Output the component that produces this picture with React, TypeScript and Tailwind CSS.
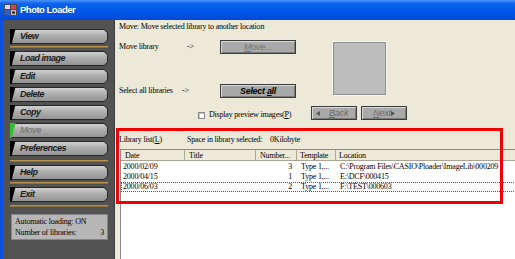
import React from 'react';

const serif = "font-['Liberation_Serif','Times_New_Roman',serif]";
const sans = "font-['Liberation_Sans',Arial,sans-serif]";

type Lib = { date: string; count: number; template: string; location: string };

const libraries: Lib[] = [
    { date: '2000/02/09', count: 3, template: 'Type 1,...', location: 'C:\\Program Files\\CASIO\\Ploader\\ImageLib\\000209' },
    { date: '2000/04/15', count: 1, template: 'Type 1,...', location: 'E:\\DCF\\000415' },
    { date: '2000/06/03', count: 2, template: 'Type 1,...', location: 'F:\\TEST\\000603' },
];

const SideButton: React.FC<{ label: string; disabled?: boolean }> = ({ label, disabled }) => (
    <div className="relative h-[15px] w-[98px] shrink-0 bg-[#262626] [clip-path:polygon(0_0,94px_0,98px_4px,98px_11px,94px_15px,0_15px)]">
        <div className="absolute left-[1px] top-[1px] flex h-[13px] w-[96px] items-center bg-[linear-gradient(180deg,#d2d2d2_0%,#b0b0b0_40%,#939393_100%)] pl-[9px] [clip-path:polygon(0_0,93px_0,96px_3px,96px_10px,93px_13px,0_13px)]">
            <span
                className={`${sans} text-[9px] font-bold italic leading-none tracking-[-0.5px] ${disabled ? 'text-[#7c7c7c]' : 'text-[#1c1c1c]'}`}
            >
                {label}
            </span>
        </div>
        <svg className="absolute left-0 top-0" width="6" height="15" viewBox="0 0 6 15">
            <polygon points="0,0 5.5,0 1.6,15 0,15" fill={disabled ? '#2fc02f' : '#000'} />
        </svg>
    </div>
);

const GoldLine: React.FC<{ className?: string }> = ({ className }) => (
    <div className={`h-[2px] w-[98px] bg-[linear-gradient(180deg,#c9a252,#7b6132)] ${className ?? ''}`} />
);

const GrayButton: React.FC<{ children: React.ReactNode; className?: string }> = ({ children, className }) => (
    <div
        className={`flex h-[14px] items-center justify-center border border-[#3c3c3c] bg-[#a9a9a9] shadow-[inset_1px_1px_0_#d8d8d8,inset_-1px_-1px_0_#7a7a7a] ${sans} text-[9px] italic leading-none ${className ?? ''}`}
    >
        {children}
    </div>
);

export default function App() {
    return (
        <div className={`flex h-[259px] w-[515px] flex-col overflow-hidden bg-[#ece9d8] ${serif} text-[8px] tracking-[-0.2px] text-black`}>
            {/* Title bar */}
            <div className="flex h-[20px] shrink-0 items-center gap-[3px] bg-[linear-gradient(180deg,#4a95fb_0%,#0c62ec_18%,#0057e8_60%,#0049d6_100%)] pl-[4px]">
                <svg width="13" height="12" viewBox="0 0 13 12">
                    <rect x="0" y="0" width="13" height="12" fill="#4a4a5a" />
                    <rect x="1" y="1" width="5" height="4" fill="#d8d8e8" />
                    <rect x="7" y="1" width="5" height="4" fill="#e04040" />
                    <rect x="1" y="6" width="5" height="5" fill="#3060d0" />
                    <rect x="7" y="6" width="5" height="5" fill="#c0c0c0" />
                    <circle cx="9.5" cy="8.5" r="1.5" fill="#303030" />
                </svg>
                <span className={`${sans} text-[9.5px] font-bold leading-none tracking-[-0.5px] text-white`}>Photo Loader</span>
            </div>

            <div className="flex flex-1">
                {/* Window frame */}
                <div className="w-[3px] shrink-0 bg-[#0a50e0]" />

                {/* Sidebar */}
                <div className="flex w-[112px] shrink-0 flex-col border-r border-[#3a3a3a] bg-[#525252] pl-[7px] pt-[9px]">
                    <SideButton label="View" />
                    <GoldLine className="mt-[2px]" />
                    <div className="mt-[3px] flex flex-col gap-[3px]">
                        <SideButton label="Load image" />
                        <SideButton label="Edit" />
                        <SideButton label="Delete" />
                        <SideButton label="Copy" />
                        <SideButton label="Move" disabled />
                        <SideButton label="Preferences" />
                    </div>
                    <GoldLine className="mt-[4px]" />
                    <div className="mt-[3px]">
                        <SideButton label="Help" />
                    </div>
                    <GoldLine className="mt-[2px]" />
                    <div className="mt-[3px]">
                        <SideButton label="Exit" />
                    </div>
                    <GoldLine className="mt-[3px]" />
                    <div className="ml-[1px] mt-[7px] flex h-[26px] w-[97px] flex-col justify-center gap-[2px] border border-[#858585] bg-[#b7b7b7] px-[3px] leading-[9px]">
                        <div>Automatic loading: ON</div>
                        <div className="flex justify-between">
                            <span>Number of libraries:</span>
                            <span>3</span>
                        </div>
                    </div>
                </div>

                {/* Main panel */}
                <div className="relative flex flex-1 flex-col overflow-hidden">
                    <div className="mt-[1px] h-[11px] pl-[4px] leading-[11px]">
                        Move: Move selected library to another location
                    </div>

                    <div className="flex">
                        <div className="flex w-[188px] shrink-0 flex-col">
                            <div className="mt-[8px] flex h-[14px] items-center whitespace-nowrap">
                                <span className="w-[72px] pl-[4px]">Move library</span>
                                <span className="w-[33px]">-&gt;</span>
                                <GrayButton className="w-[76px] text-[#747474]">
                                    <span>
                                        <span className="underline">M</span>ove...
                                    </span>
                                </GrayButton>
                            </div>
                            <div className="mt-[30px] flex h-[14px] items-center whitespace-nowrap">
                                <span className="w-[67px] pl-[4px]">Select all libraries</span>
                                <span className="w-[38px]">-&gt;</span>
                                <GrayButton className="w-[76px] font-bold tracking-[-0.3px] text-black">
                                    <span>
                                        Select <span className="underline">a</span>ll
                                    </span>
                                </GrayButton>
                            </div>
                            <div className="ml-[83px] mt-[12px] flex h-[10px] items-center gap-[4px] whitespace-nowrap">
                                <div className="h-[7px] w-[7px] shrink-0 border border-[#8a8a8a] bg-white shadow-[inset_1px_1px_0_#c8c8c8]" />
                                <span>
                                    Display preview images(<span className="underline">P</span>)
                                </span>
                            </div>
                        </div>

                        <div className="flex flex-col">
                            <div className="ml-[30px] mt-[10px] h-[53px] w-[53px] border border-[#8e8e8e] bg-[#bdbdbd] shadow-[0_0_0_1px_#f6f6f2]" />
                            <div className="ml-[8px] mt-[11px] flex gap-[4px]">
                                <GrayButton className="w-[46px] justify-start gap-[9px] pl-[4px] text-[#6a6a6a]">
                                    <svg width="4" height="5" viewBox="0 0 4 5">
                                        <polygon points="4,0 4,5 0,2.5" fill="#555" />
                                    </svg>
                                    <span>
                                        <span className="underline">B</span>ack
                                    </span>
                                </GrayButton>
                                <GrayButton className="w-[46px] justify-between pl-[4px] pr-[4px] text-[#6a6a6a]">
                                    <span>
                                        <span className="underline">N</span>ext
                                    </span>
                                    <svg width="4" height="5" viewBox="0 0 4 5">
                                        <polygon points="0,0 4,2.5 0,5" fill="#555" />
                                    </svg>
                                </GrayButton>
                            </div>
                        </div>
                    </div>

                    {/* Library list */}
                    <div className="mt-[14px] flex h-[11px] items-center whitespace-nowrap">
                        <span className="w-[72px] shrink-0 pl-[4px]">
                            Library list(<span className="underline">L</span>)
                        </span>
                        <span className="w-[83px] shrink-0">Space in library selected:</span>
                        <span>0Kilobyte</span>
                    </div>

                    <div className="ml-[5px] mt-[4px] flex w-[420px] flex-1 flex-col border-l border-t border-[#8a8a8a] bg-white">
                        <div className="flex h-[11px] items-center border-b border-[#a8a596] bg-[#ece9d8] leading-none">
                            <div className="h-full w-[64px] border-r border-[#aca899] pl-[4px] pt-[2px]">Date</div>
                            <div className="h-full w-[71px] border-r border-[#aca899] pl-[4px] pt-[2px]">Title</div>
                            <div className="h-full w-[41px] border-r border-[#aca899] pl-[4px] pt-[2px]">Number...</div>
                            <div className="h-full w-[39px] border-r border-[#aca899] pl-[3px] pt-[2px]">Template</div>
                            <div className="h-full flex-1 pl-[3px] pt-[2px]">Location</div>
                        </div>
                        <div className="mt-[1px] flex flex-col">
                            {libraries.map((lib, i) => (
                                <div
                                    key={lib.date}
                                    className={`flex h-[10px] items-center whitespace-nowrap leading-none ${i === 2 ? 'border border-dotted border-[#555]' : 'border border-transparent'}`}
                                >
                                    <div className="w-[64px] pl-[1px]">{lib.date}</div>
                                    <div className="w-[71px]" />
                                    <div className="w-[41px] pr-[6px] text-right">{lib.count}</div>
                                    <div className="w-[39px] pl-[3px]">{lib.template}</div>
                                    <div className="flex-1 pl-[3px]">{lib.location}</div>
                                </div>
                            ))}
                        </div>
                    </div>

                    {/* Highlight annotation */}
                    <div className="pointer-events-none absolute left-[1px] top-[108px] h-[76px] w-[387px] border-[3px] border-[#f00000]" />
                </div>
            </div>
        </div>
    );
}
